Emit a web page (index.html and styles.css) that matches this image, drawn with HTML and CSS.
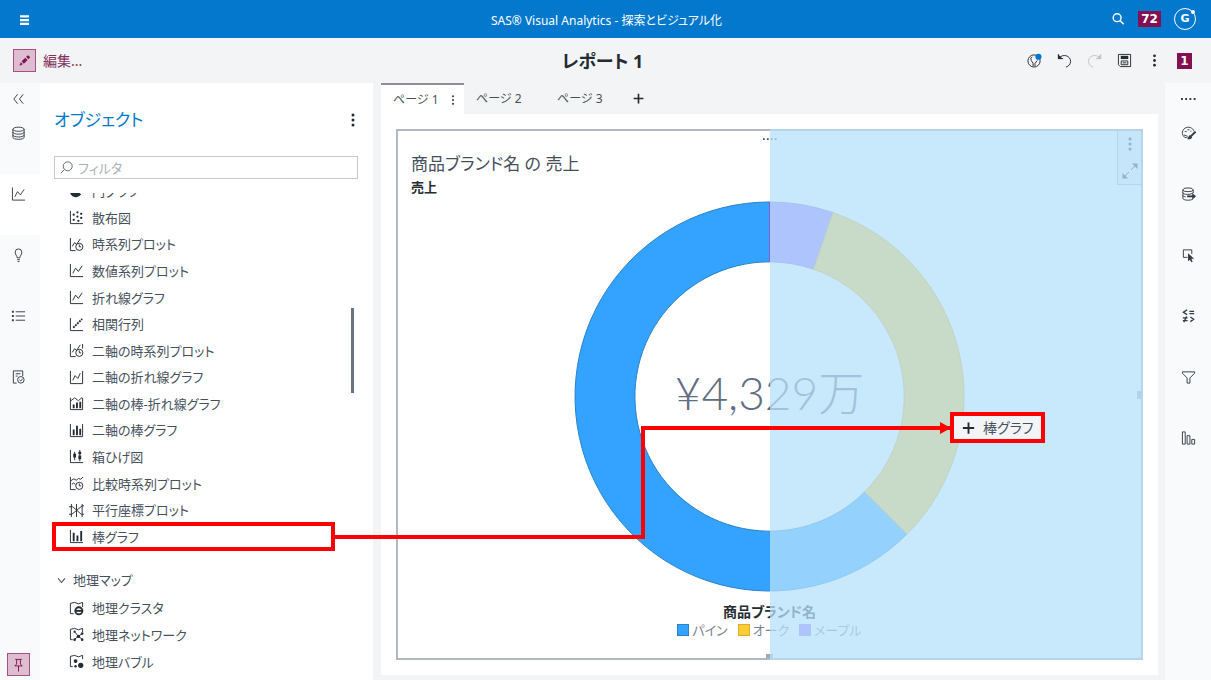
FILE: index.html
```html
<!DOCTYPE html>
<html lang="ja">
<head>
<meta charset="utf-8">
<meta name="viewport" content="width=device-width, initial-scale=1">
<title>SAS® Visual Analytics - 探索とビジュアル化</title>
<link rel="stylesheet" href="styles.css">
</head>
<body>
<svg class="defs" aria-hidden="true">
  <symbol id="line" viewBox="0 0 16 16"><path d="M1.5 1v13.5H15M4 11l3-5.500 3 3.500 4-6"/></symbol>
  <symbol id="clock-line" viewBox="0 0 16 16"><path d="M1.500 1v13.500H7M3.500 10l2.500-4 2 2 4-6"/><circle cx="11" cy="10.500" r="3.800"/><path d="M11 8v2.500h2"/></symbol>
  <symbol id="clock-dual" viewBox="0 0 16 16"><path d="M1.500 1v13.500H7M3.500 10l2.500-4 2 2 4-6M14.500 1v5"/><circle cx="11" cy="10.500" r="3.800"/><path d="M11 8v2.500h2"/></symbol>
  <symbol id="scatter" viewBox="0 0 16 16"><path d="M1.500 1v13.500H15"/><g class="solid"><circle cx="5" cy="5" r="1.200"/><circle cx="9" cy="2.500" r="1.200"/><circle cx="13" cy="4" r="1.200"/><circle cx="9" cy="7" r="1.200"/><circle cx="13" cy="8.500" r="1.200"/><circle cx="5" cy="10.500" r="1.200"/><circle cx="10" cy="11.500" r="1.200"/></g></symbol>
  <symbol id="corr" viewBox="0 0 16 16"><path d="M1.500 1v13.500H15"/><path class="dots" d="M4.500 11.500L14 2"/></symbol>
  <symbol id="dual-line" viewBox="0 0 16 16"><path d="M1.500 1v13.500h13V1M4 11l2.500-5 3 3L12 3.500"/></symbol>
  <symbol id="bar-line" viewBox="0 0 16 16"><path d="M1.500 2v12.500h13V2M2 5l4-3 4 3 4-3.500"/><path class="bars" d="M5 13V9M8.500 13V7M12 13V6"/></symbol>
  <symbol id="dual-bar" viewBox="0 0 16 16"><path d="M1.500 1v13.500h13V1"/><path class="bars" d="M5 13V7M8.500 13V3M12 13V6"/></symbol>
  <symbol id="box" viewBox="0 0 16 16"><path d="M1.500 1v13.500H15M6 3v9M11.500 1v12"/><path class="wide-bars" d="M6 5v4M11.500 3v2.500M11.500 7v4"/></symbol>
  <symbol id="compare" viewBox="0 0 16 16"><path d="M1.500 1v13.500H7M2 5l3-2 3 1.500 2-2 2.500 1L15 1M3 9l2-1.500L7 9"/><circle cx="11" cy="10.500" r="3.800"/><path d="M11 8v2.500h2"/></symbol>
  <symbol id="parallel" viewBox="0 0 16 16"><path d="M2.500 1v14M8 1v14M14 1v14M0 4h4l9 8h3M0 12h3l5-4 6-5h2"/></symbol>
  <symbol id="bar" viewBox="0 0 16 16"><path d="M1.500 1v13.500H15"/><path class="bars" d="M5 13V4M9 13V7M13 13V2"/></symbol>
  <symbol id="geo-cluster" viewBox="0 0 16 16"><path d="M5 13.500H1.500v-11L6 1.500l4 1.500 4.500-1.500v5"/><circle class="ring" cx="10.500" cy="10.500" r="3.800"/><path class="ring" d="M7 10.500h7"/></symbol>
  <symbol id="geo-net" viewBox="0 0 16 16"><path d="M4 13.500H1.500v-11L6 1.500l4 1.500 4.500-1.500v4M6 5l4 5 4-3M10 10l-4 3M10 10l4 3"/><g class="solid"><circle cx="6" cy="5" r="1.200"/><circle cx="10" cy="10" r="1.800"/><circle cx="14" cy="7" r="1.400"/><circle cx="6" cy="13.500" r="1.400"/><circle cx="14" cy="13.500" r="1.400"/></g></symbol>
  <symbol id="geo-bubble" viewBox="0 0 16 16"><path d="M4 13.500H1.500v-11L6 1.500l4 1.500 4.500-1.500v4"/><g class="solid"><circle cx="7" cy="7.500" r="2"/><circle cx="12.500" cy="12" r="2.800"/><circle cx="7" cy="13" r="1.300"/></g></symbol>
  <symbol id="pie" viewBox="0 0 16 16"><path class="solid" d="M1 8a6.500 6.500 0 0 0 12 3L8 7z"/><path d="M9 1.500a6 6 0 0 1 6 8L9 6z"/></symbol>
  <symbol id="kebab" viewBox="0 0 16 16"><g class="solid"><circle cx="8" cy="3" r="1.500"/><circle cx="8" cy="8" r="1.500"/><circle cx="8" cy="13" r="1.500"/></g></symbol>
  <symbol id="grip" viewBox="0 0 16 16"><path class="solid" d="M0 7h2v2H0zM4.500 7h2v2h-2zM9 7h2v2H9zM13.500 7h2v2h-2z"/></symbol>
  <symbol id="plus" viewBox="0 0 16 16"><path class="bars" d="M8 2v12M2 8h12"/></symbol>
</svg>

<header class="topbar">
  <button class="icon-btn menu" aria-label="メニュー"><svg class="icon" viewBox="0 0 16 16"><path class="wide-bars" d="M2 3h12M2 8h12M2 13h12"/></svg></button>
  <div class="app-name">SAS® Visual Analytics - 探索とビジュアル化</div>
  <div class="top-actions">
    <button class="icon-btn" aria-label="検索"><svg class="icon search" viewBox="0 0 16 16"><circle cx="7" cy="6.500" r="4.500"/><path d="M10.500 10l4 4"/></svg></button>
    <span class="badge wide">72</span>
    <button class="avatar" aria-label="アカウント">G<i></i></button>
  </div>
</header>

<div class="toolbar">
  <button class="edit"><span class="edit-icon"><svg class="icon" viewBox="0 0 16 16"><path class="solid" d="M1.500 14.500l2-4.500 2.500 2.500zM4.500 9l4.500-4.500 2.800 2.800L7.200 12zM10 3.500L12.500 1.500l2.500 2.500-2.200 2.400z"/></svg></span>編集...</button>
  <h1>レポート 1</h1>
  <div class="tools">
    <button class="icon-btn" aria-label="提案"><svg class="icon" viewBox="0 0 16 16"><circle cx="7.500" cy="8.500" r="6.500"/><path d="M6.500 14v-3L4.500 8a3 3 0 0 1 1-4M8.500 14v-3l2.500-3"/><circle class="note" cx="12.200" cy="4" r="3.300"/></svg></button>
    <button class="icon-btn" aria-label="元に戻す"><svg class="icon" viewBox="0 0 16 16"><path d="M2 5.500C6 .5 14.500 2.500 14.500 9c0 3-2 5.200-5 6M1.500 1.500v4.500h5"/><path class="solid" d="M1 1l5 5.500H1z"/></svg></button>
    <button class="icon-btn faded" aria-label="やり直す"><svg class="icon" viewBox="0 0 16 16"><path d="M14 5.500C10 .5 1.500 2.500 1.500 9c0 3 2 5.200 5 6M14.500 1.500v4.500h-5"/><path class="solid" d="M15 1v5.500h-5z"/></svg></button>
    <button class="icon-btn" aria-label="保存"><svg class="icon" viewBox="0 0 16 16"><path d="M1.500 1.500h13v13h-11l-2-2zM4.500 8.500h7v4h-7zM6 10.500h4"/><path class="solid" d="M4 3h8v3.500H4z"/></svg></button>
    <button class="icon-btn" aria-label="その他"><svg class="icon"><use href="#kebab"/></svg></button>
    <span class="badge">1</span>
  </div>
</div>

<div class="workspace">
  <nav class="rail left" aria-label="ペイン">
    <button class="first" aria-label="折りたたむ"><svg class="icon" viewBox="0 0 16 16"><path d="M7 3L3 8l4 5M13 3L9 8l4 5"/></svg></button>
    <button aria-label="データ"><svg class="icon" viewBox="0 0 16 16"><ellipse cx="8" cy="4" rx="6" ry="2.200"/><path d="M2 4v8.500c0 3 12 3 12 0V4M2 7c0 3 12 3 12 0M2 10c0 3 12 3 12 0"/></svg></button>
    <button class="active" aria-label="オブジェクト"><svg class="icon"><use href="#line"/></svg></button>
    <button aria-label="提案"><svg class="icon" viewBox="0 0 16 16"><path d="M6.500 11C6.500 8.500 4.500 8 4.500 5a3.500 3.500 0 0 1 7 0c0 3-2 3.500-2 6zM6.500 13h3M7 15h2"/></svg></button>
    <button aria-label="アウトライン"><svg class="icon" viewBox="0 0 16 16"><path d="M5 3.500h10M5 8h10M5 12.500h10"/><path class="bars" d="M1 3.500h2M1 8h2M1 12.500h2"/></svg></button>
    <button aria-label="レビュー"><svg class="icon" viewBox="0 0 16 16"><path d="M6 14.500H2.500v-13h10V7M5 4.500h5M5 7h2"/><circle cx="10.500" cy="11" r="3.500"/><path d="M9 11l1.500 1.200 2-2.500"/></svg></button>
    <button class="pin" aria-label="固定"><svg class="icon" viewBox="0 0 16 16"><path d="M4.500 2h7M6 2v5M10 2v5M4 9h8M6 7L4 9M10 7l2 2M8 9v6"/></svg></button>
  </nav>

  <section class="panel">
    <div class="panel-head"><h2>オブジェクト</h2><button class="icon-btn" aria-label="オプション"><svg class="icon"><use href="#kebab"/></svg></button></div>
    <label class="filter"><svg class="icon" viewBox="0 0 16 16"><circle cx="9.500" cy="6.500" r="5.500"/><path d="M5.500 10.500l-4.500 4.500"/></svg><input type="text" placeholder="フィルタ" aria-label="フィルタ"></label>
    <div class="scroller">
      <ul class="objects graphs">
        <li><svg class="icon"><use href="#pie"/></svg>円グラフ</li>
        <li><svg class="icon"><use href="#scatter"/></svg>散布図</li>
        <li><svg class="icon"><use href="#clock-line"/></svg>時系列プロット</li>
        <li><svg class="icon"><use href="#line"/></svg>数値系列プロット</li>
        <li><svg class="icon"><use href="#line"/></svg>折れ線グラフ</li>
        <li><svg class="icon"><use href="#corr"/></svg>相関行列</li>
        <li><svg class="icon"><use href="#clock-dual"/></svg>二軸の時系列プロット</li>
        <li><svg class="icon"><use href="#dual-line"/></svg>二軸の折れ線グラフ</li>
        <li><svg class="icon"><use href="#bar-line"/></svg>二軸の棒-折れ線グラフ</li>
        <li><svg class="icon"><use href="#dual-bar"/></svg>二軸の棒グラフ</li>
        <li><svg class="icon"><use href="#box"/></svg>箱ひげ図</li>
        <li><svg class="icon"><use href="#compare"/></svg>比較時系列プロット</li>
        <li><svg class="icon"><use href="#parallel"/></svg>平行座標プロット</li>
        <li class="marked"><svg class="icon"><use href="#bar"/></svg>棒グラフ</li>
      </ul>
      <button class="group"><svg class="icon" viewBox="0 0 16 16"><path class="fine" d="M3 5l5 6 5-6"/></svg>地理マップ</button>
      <ul class="objects maps">
        <li><svg class="icon"><use href="#geo-cluster"/></svg>地理クラスタ</li>
        <li><svg class="icon"><use href="#geo-net"/></svg>地理ネットワーク</li>
        <li><svg class="icon"><use href="#geo-bubble"/></svg>地理バブル</li>
      </ul>
      <span class="thumb"></span>
    </div>
  </section>

  <main class="report">
    <div class="tabs">
      <div class="tab current"><button>ページ 1</button><button class="icon-btn" aria-label="ページ メニュー"><svg class="icon small"><use href="#kebab"/></svg></button></div>
      <button class="tab">ページ 2</button>
      <button class="tab">ページ 3</button>
      <button class="icon-btn add" aria-label="ページの追加"><svg class="icon"><use href="#plus"/></svg></button>
    </div>
    <div class="page">
      <article class="card">
        <h3>商品ブランド名 の 売上</h3>
        <h4>売上</h4>
        <div class="chart">
          <svg viewBox="0 0 392 392" role="img" aria-label="ドーナツ グラフ">
            <path class="pine" d="M333.900 333.900A195 195 0 1 1 196 1V61A135 135 0 1 0 291.500 291.500Z"/>
            <path class="maple" d="M196 1A195 195 0 0 1 259.800 11.700L240.200 68.400A135 135 0 0 0 196 61Z"/>
            <path class="oak" d="M259.800 11.700A195 195 0 0 1 333.900 333.900L291.500 291.500A135 135 0 0 0 240.200 68.400Z"/>
          </svg>
          <div class="total">¥4,329万</div>
        </div>
        <div class="axis">商品ブランド名</div>
        <ul class="legend"><li class="pine">パイン</li><li class="oak">オーク</li><li class="maple">メープル</li></ul>
        <svg class="icon grip"><use href="#grip"/></svg>
        <i class="handle bottom"></i><i class="handle side"></i>
        <div class="card-menu">
          <button class="icon-btn" aria-label="オブジェクト メニュー"><svg class="icon"><use href="#kebab"/></svg></button>
          <button class="icon-btn" aria-label="最大化"><svg class="icon" viewBox="0 0 16 16"><path d="M9 7l5-5M7 9l-5 5"/><path class="solid" d="M10 .5h5.500V6zM.5 10v5.500H6z"/></svg></button>
        </div>
        <div class="drop-zone"></div>
        <div class="drag-chip"><svg class="icon"><use href="#plus"/></svg>棒グラフ</div>
      </article>
    </div>
  </main>

  <nav class="rail right" aria-label="オプション">
    <button class="first" aria-label="グリップ"><svg class="icon"><use href="#grip"/></svg></button>
    <button aria-label="外観"><svg class="icon" viewBox="0 0 16 16"><path d="M7 12.500C3 14 1 10 1.500 7 2.500 2 8 .5 11.500 3c1.500 1 2 2 2 3M3 10l4 1.500M4 6.500h2M7 4.500h2M10 6h1"/><path class="bars" d="M15.500 6.500l-5 5"/><path class="solid" d="M9.500 10l2.500 2.500c-1.500 2.500-3.500 2.500-5.500 2 1.500-1 1-3 3-4.500z"/></svg></button>
    <button aria-label="データの役割"><svg class="icon" viewBox="0 0 16 16"><ellipse cx="7.500" cy="3.500" rx="5.500" ry="2"/><path d="M2 3.500v9c0 2.500 8 2.700 10.500 1M13 3.500V7M2 6.500c0 2.500 9 2.700 11 0M2 9.500c0 1 2 1.500 3 1.500"/><path class="bars" d="M6.500 10.500H13"/><path class="solid" d="M12 7l4 3.500-4 3.500z"/></svg></button>
    <button aria-label="アクション"><svg class="icon" viewBox="0 0 16 16"><path d="M7 10.500H2.500v-8h9V7"/><path class="solid" d="M7.500 6l6.500 6h-3l1.500 3-1.500.7L9.500 13l-2 1.700z"/></svg></button>
    <button aria-label="ルール"><svg class="icon" viewBox="0 0 16 16"><path class="heavy" d="M6.500 1.500L2.500 4l4 2.500M9 3h5M9 5.500h5M2 10h5M2 13h5M6 8.500l-3 6M10 9l3.500 2.500L10 14"/></svg></button>
    <button aria-label="フィルタ"><svg class="icon" viewBox="0 0 16 16"><path d="M1.500 2.500h13v1.500L9.500 9v5.500h-3V9l-5-5z"/></svg></button>
    <button aria-label="順位"><svg class="icon" viewBox="0 0 16 16"><path d="M1.500 1.500h3v13h-3zM6.500 5.500h3v9h-3zM11.500 9.500h3v5h-3z"/></svg></button>
  </nav>
</div>

<div class="connector" aria-hidden="true"><span class="leg start"></span><span class="leg end"></span></div>
</body>
</html>
```
FILE: styles.css
```css
* { box-sizing: border-box; }

body {
  position: relative;
  display: grid;
  grid-template-rows: 38px 45px minmax(0, 1fr);
  height: 100vh;
  margin: 0;
  overflow: hidden;
  background: #f2f4f6;
  color: #46505c;
  font: 13px/20px "Noto Sans", "Noto Sans CJK JP", sans-serif;
  font-feature-settings: "palt";
}

h1, h2, h3, h4, ul { margin: 0; padding: 0; font-weight: 400; }
ul { list-style: none; }

button {
  padding: 0;
  border: 0;
  background: none;
  color: inherit;
  font: inherit;
  font-feature-settings: inherit;
}

.defs { position: absolute; width: 0; height: 0; }

.icon {
  display: block;
  flex: none;
  width: 16px;
  height: 16px;
  fill: none;
  stroke: currentColor;
}
.icon.small { width: 12px; height: 12px; }
.solid { fill: currentColor; stroke: none; }
.bars, .ring { stroke-width: 2; }
.wide-bars { stroke-width: 3; }
.heavy { stroke-width: 1.4; }
.fine { stroke-width: 1.5; }
.dots { stroke-width: 2; stroke-dasharray: 2 1; }
.note { fill: #0378cd; stroke: none; }

.icon-btn { display: grid; place-items: center; }

/* Application bar */
.topbar, .toolbar {
  display: grid;
  grid-template-columns: 1fr auto 1fr;
  align-items: center;
}
.topbar {
  padding: 0 15px 0 17px;
  background: #0378cd;
  color: #fff;
}
.menu { justify-self: start; margin-top: 2px; }
.menu .icon { width: 15px; height: 12px; }
.app-name { padding-top: 4px; font-size: 12px; }
.top-actions {
  display: flex;
  justify-content: flex-end;
  align-items: center;
  gap: 13px;
}
.search { width: 14px; height: 14px; stroke-width: 1.6; }
.badge {
  display: grid;
  place-items: center;
  width: 15px;
  height: 16px;
  background: #85104f;
  color: #fff;
  font: bold 12px/16px "DejaVu Sans", sans-serif;
}
.badge.wide { width: 23px; }
.avatar {
  position: relative;
  width: 22px;
  height: 22px;
  border: 1px solid #fff;
  border-radius: 50%;
  font: bold 11px/20px "DejaVu Sans", sans-serif;
}
.avatar i {
  position: absolute;
  top: 1px;
  right: 0;
  width: 4px;
  height: 4px;
  border-radius: 50%;
  background: #fff;
}

/* Report toolbar */
.toolbar { padding: 0 19px 0 13px; }
.edit {
  display: flex;
  align-items: center;
  gap: 7px;
  justify-self: start;
  color: #85305f;
  font-size: 14px;
}
.edit-icon, .pin {
  display: grid;
  place-items: center;
  width: 23px;
  height: 23px;
  border: 1px solid #a94f82;
  background: #dcbed0;
  color: #85104f;
}
.edit-icon .icon { width: 13px; height: 13px; }
.toolbar h1 {
  color: #242b33;
  font-size: 18px;
  line-height: 24px;
  font-weight: 700;
}
.tools {
  display: flex;
  justify-content: flex-end;
  align-items: center;
  gap: 15px;
  color: #242b33;
}
.tools .icon { width: 15px; height: 15px; }
.faded { color: #bfc3c7; }

.workspace {
  display: grid;
  grid-template-columns: 40px 333px minmax(0, 1fr) 46px;
  grid-template-rows: minmax(0, 1fr);
  min-height: 0;
}

/* Icon rails */
.rail {
  display: flex;
  flex-direction: column;
  min-height: 0;
  background: #f8fafc;
  color: #333b45;
}
.rail button {
  display: grid;
  justify-items: center;
  align-content: start;
  height: 61px;
  padding-top: 12px;
}
.rail .icon { width: 15px; }
.rail.left button { padding-right: 3px; }
.rail .first { height: 30px; padding-top: 8px; }
.rail .active { background: #fff; }
.rail .pin, .rail.left .pin {
  align-content: center;
  width: 23px;
  height: 23px;
  margin: auto 0 4px 7px;
  padding: 0;
  color: #85104f;
}

/* Objects panel */
.panel {
  display: flex;
  flex-direction: column;
  min-height: 0;
  background: #fff;
}
.panel-head {
  display: flex;
  justify-content: space-between;
  align-items: center;
  height: 73px;
  padding: 0 12px 0 14px;
  color: #242b33;
}
.panel-head h2 {
  color: #0378cd;
  font-size: 17px;
  line-height: 24px;
}
.filter {
  display: flex;
  align-items: center;
  gap: 5px;
  height: 23px;
  margin: 0 15px 14px 14px;
  padding-left: 5px;
  border: 1px solid #c5cad1;
}
.filter .icon { width: 13px; height: 13px; }
.filter input {
  flex: 1;
  min-width: 0;
  padding: 0;
  border: 0;
  outline: 0;
  background: none;
  font: inherit;
  font-feature-settings: inherit;
}
.filter input::placeholder { color: #a9b0b8; }
.scroller {
  position: relative;
  flex: 1;
  min-height: 0;
  overflow: hidden;
}
.objects { display: grid; grid-auto-rows: 1fr; }
.graphs { height: 372px; margin-top: -15px; }
.maps { height: 80px; }
.objects li {
  position: relative;
  display: flex;
  align-items: center;
  gap: 8px;
  padding-left: 29px;
}
.objects .icon { width: 15px; height: 15px; color: #242b33; }
.marked::after {
  content: "";
  position: absolute;
  inset: -1px 38px -1px 12px;
  border: 4px solid #f00;
}
.group {
  display: flex;
  align-items: center;
  gap: 6px;
  height: 30px;
  margin: 15px 0 0 16px;
}
.group .icon { width: 11px; height: 11px; }
.thumb {
  position: absolute;
  top: 115px;
  right: 19px;
  width: 3px;
  height: 85px;
  background: #6a7381;
}

/* Report pages */
.report {
  display: flex;
  flex-direction: column;
  min-width: 0;
  min-height: 0;
  padding: 0 7px 5px 8px;
}
.tabs { display: flex; height: 31px; }
.tab { width: 81px; padding: 0 12px; font-size: 12px; text-align: left; }
.tab.current {
  display: flex;
  justify-content: space-between;
  align-items: center;
  width: 83px;
  padding-right: 5px;
  border-top: 2px solid #8b9097;
  background: #fff;
}
.add { width: 24px; color: #242b33; }
.add .icon { width: 13px; height: 13px; }
.page {
  display: flex;
  flex: 1;
  min-height: 0;
  padding: 15px;
  background: #fff;
}
.card {
  position: relative;
  display: flex;
  flex: 1;
  flex-direction: column;
  min-width: 0;
  min-height: 0;
  padding: 20px 13px;
  border: 2px solid #b0b8c4;
}
.card h3 { font-size: 17px; line-height: 26px; }
.card h4 {
  margin-bottom: 4px;
  color: #242b33;
  font-weight: 700;
}
.chart {
  display: grid;
  flex: 1;
  grid-template: minmax(0, 1fr) / minmax(0, 1fr);
  place-items: center;
  min-height: 0;
}
.chart svg, .total { grid-area: 1 / 1; }
.chart svg { width: 100%; height: 100%; }
.chart .pine { fill: #33a3ff; stroke: #2b82c9; }
.chart .oak { fill: #ffcc32; stroke: #d9ae2e; }
.chart .maple { fill: #9471ff; stroke: #7c62d0; }
.total {
  padding-bottom: 8px;
  color: #5f6d80;
  font: 300 46px/56px Lato, "Noto Sans CJK JP", sans-serif;
}
.axis {
  margin-top: 10px;
  color: #242b33;
  font-weight: 700;
  font-size: 14px;
  text-align: center;
}
.legend {
  display: flex;
  justify-content: center;
  gap: 10px;
  color: #7a8391;
  line-height: 16px;
}
.legend li { display: flex; align-items: center; gap: 3px; }
.legend li::before {
  content: "";
  width: 10px;
  height: 10px;
  border: 1px solid #2b82c9;
  background: #33a3ff;
}
.legend .oak::before { border-color: #d9ae2e; background: #ffcc32; }
.legend .maple::before { border-color: #9471ff; background: #9471ff; }

.card > .grip {
  position: absolute;
  top: 0;
  left: 50%;
  width: 14px;
  margin-left: -7px;
}
.handle { position: absolute; background: #a3abb7; }
.handle.bottom { bottom: 0; left: 50%; width: 7px; height: 4px; margin-left: -4px; }
.handle.side { top: 50%; right: 0; width: 4px; height: 8px; margin-top: -4px; }
.card-menu {
  position: absolute;
  top: 0;
  right: 0;
  display: grid;
  gap: 11px;
  width: 24px;
  padding: 5px 0;
  border: 1px solid #b0b8c4;
  border-width: 0 0 1px 1px;
  background: #f2f4f6;
  color: #242b33;
}
.drop-zone {
  position: absolute;
  inset: -2px -2px -2px 50%;
  background: rgba(181, 224, 251, 0.75);
}
.drag-chip {
  position: absolute;
  top: 281px;
  right: 96px;
  display: flex;
  align-items: center;
  gap: 7px;
  width: 95px;
  height: 31px;
  padding-left: 7px;
  border: 4px solid #f00;
  background: #f2f4f6;
  font-size: 14px;
}
.drag-chip .icon { width: 15px; color: #242b33; }

/* Connector between the list entry and the drop target */
.connector {
  position: absolute;
  top: 426px;
  right: 260px;
  left: 335px;
  display: flex;
  height: 113px;
  pointer-events: none;
}
.leg { flex: 1; }
.leg.start { border: solid #f00; border-width: 0 4px 4px 0; }
.leg.end { border-top: 4px solid #f00; }
.leg.start { border-top-width: 4px; border-image: linear-gradient(#f00, #f00) 1; border-image-width: 0 4px 4px 0; }
.connector::after {
  content: "";
  position: absolute;
  top: -4px;
  right: 0;
  border: 6px solid transparent;
  border-right: 0;
  border-left: 11px solid #f00;
}
```
